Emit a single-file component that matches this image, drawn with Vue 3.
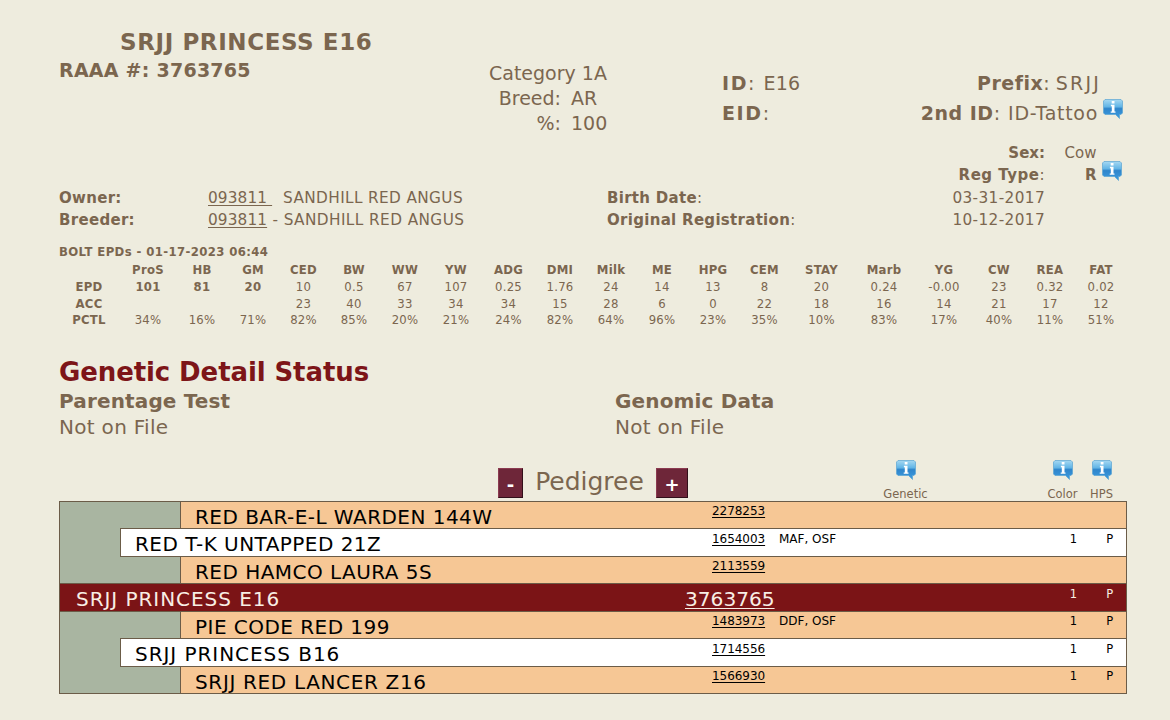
<template>
  <div class="page">
    <svg width="0" height="0" class="defs">
      <defs>
        <linearGradient id="bubble" x1="0" y1="0" x2="0" y2="1">
          <stop offset="0" stop-color="#a5d8f2" />
          <stop offset="0.38" stop-color="#62b5e6" />
          <stop offset="0.48" stop-color="#2f85cb" />
          <stop offset="1" stop-color="#3c9ce0" />
        </linearGradient>
        <symbol id="info" viewBox="0 0 20 20">
          <path d="M2 .5h16l1.500 1.500v12l-1.500 1.500h-1.500v4l-4-4H2L.5 14V2z" fill="url(#bubble)" stroke="#5aa5d3" stroke-width=".7" />
          <path d="M8.700 2h2.800v2.400H8.700zM7.900 5.800h3.600v6.600h1v1.400H7.700v-1.400h1.100V7.200h-.9z" fill="#fff" />
        </symbol>
      </defs>
    </svg>

    <!-- Animal header -->
    <header class="header">
      <div class="identity">
        <h1>SRJJ PRINCESS E16</h1>
        <div class="raaa">RAAA #: 3763765</div>
      </div>
      <div class="breed">
        <div class="category">Category 1A</div>
        <dl>
          <dt>Breed:</dt><dd>AR</dd>
          <dt>%:</dt><dd>100</dd>
        </dl>
      </div>
      <div class="ids">
        <div><b>ID</b>: <span class="tag">E16</span></div>
        <div><b>EID</b>:</div>
      </div>
      <div class="prefix">
        <div class="prefix-row"><b>Prefix</b>: <span class="srjj">SRJJ</span></div>
        <div class="tattoo-row"><b>2nd ID</b>: <span>ID-Tattoo</span><svg class="info"><use href="#info" /></svg></div>
      </div>
    </header>

    <!-- Sex and registration type -->
    <section class="type">
      <b class="type-label">Sex:</b><span class="type-value">Cow</span><i></i>
      <span class="type-label"><b>Reg Type</b>:</span><b class="type-value">R</b>
      <svg class="info"><use href="#info" /></svg>
    </section>

    <!-- Owner, breeder and dates -->
    <section class="owners">
      <b>Owner:</b>
      <span><a>093811&nbsp;</a><span class="owner-name">SANDHILL RED ANGUS</span></span>
      <span class="date-label"><b>Birth Date</b>:</span>
      <span class="date">03-31-2017</span>
      <b>Breeder:</b>
      <span><a>093811</a><span class="breeder-name"> - SANDHILL RED ANGUS</span></span>
      <span class="date-label"><b>Original Registration</b>:</span>
      <span class="date">10-12-2017</span>
    </section>

    <!-- EPDs -->
    <section class="epds">
      <div class="epd-title">BOLT EPDs - 01-17-2023 06:44</div>
      <div class="epd-grid">
        <div class="epd-col labels">
          <span></span><span>EPD</span><span>ACC</span><span>PCTL</span>
        </div>
        <div v-for="(e, i) in epds" :key="e[0]" class="epd-col" :class="{ index: i < 3 }">
          <b>{{ e[0] }}</b><span class="epd">{{ e[1] }}</span><span>{{ e[2] }}</span><span>{{ e[3] }}</span>
        </div>
      </div>
    </section>

    <!-- Genetic status -->
    <section class="genetic">
      <h2>Genetic Detail Status</h2>
      <div class="tests">
        <div><h3>Parentage Test</h3><p>Not on File</p></div>
        <div><h3>Genomic Data</h3><p>Not on File</p></div>
      </div>
    </section>

    <!-- Pedigree -->
    <section>
      <div class="pedigree-head">
        <div class="pedigree-title">
          <button class="minus">-</button><span>Pedigree</span><button class="plus">+</button>
        </div>
        <div v-for="c in ['Genetic', 'Color', 'HPS']" :key="c" class="legend" :class="c.toLowerCase()">
          <svg class="info"><use href="#info" /></svg>
          <span>{{ c }}</span>
        </div>
      </div>
      <div class="tree">
        <div v-for="a in animals" :key="a.reg" class="row" :class="a.level">
          <div class="bar">
            <span class="name" :class="{ srjj: a.name.startsWith('SRJJ P') }">{{ a.name }}</span>
            <span class="reg"><a>{{ a.reg }}</a></span>
            <span class="flags">{{ a.flags }}</span>
            <span class="color-code">{{ a.color }}</span>
            <span class="hps-code">{{ a.hps }}</span>
          </div>
        </div>
      </div>
    </section>
  </div>
</template>

<script setup>
// trait, EPD, accuracy, percentile
const epds = [
  ['ProS', '101', '', '34%'],
  ['HB', '81', '', '16%'],
  ['GM', '20', '', '71%'],
  ['CED', '10', '23', '82%'],
  ['BW', '0.5', '40', '85%'],
  ['WW', '67', '33', '20%'],
  ['YW', '107', '34', '21%'],
  ['ADG', '0.25', '34', '24%'],
  ['DMI', '1.76', '15', '82%'],
  ['Milk', '24', '28', '64%'],
  ['ME', '14', '6', '96%'],
  ['HPG', '13', '0', '23%'],
  ['CEM', '8', '22', '35%'],
  ['STAY', '20', '18', '10%'],
  ['Marb', '0.24', '16', '83%'],
  ['YG', '-0.00', '14', '17%'],
  ['CW', '23', '21', '40%'],
  ['REA', '0.32', '17', '11%'],
  ['FAT', '0.02', '12', '51%'],
];

const animals = [
  { level: 'grand', name: 'RED BAR-E-L WARDEN 144W', reg: '2278253' },
  { level: 'parent', name: 'RED T-K UNTAPPED 21Z', reg: '1654003', flags: 'MAF, OSF', color: '1', hps: 'P' },
  { level: 'grand', name: 'RED HAMCO LAURA 5S', reg: '2113559' },
  { level: 'self', name: 'SRJJ PRINCESS E16', reg: '3763765', color: '1', hps: 'P' },
  { level: 'grand', name: 'PIE CODE RED 199', reg: '1483973', flags: 'DDF, OSF', color: '1', hps: 'P' },
  { level: 'parent', name: 'SRJJ PRINCESS B16', reg: '1714556', color: '1', hps: 'P' },
  { level: 'grand', name: 'SRJJ RED LANCER Z16', reg: '1566930', color: '1', hps: 'P' },
];
</script>

<style>
body {
  background: #eeecde;
}
</style>

<style scoped>
.page {
  box-sizing: border-box;
  width: 1170px;
  height: 720px;
  padding: 28px 43px 0 59px;
  overflow: hidden;
  background: #eeecde;
  color: #7b664f;
  font-family: Verdana, "DejaVu Sans", sans-serif;
  white-space: nowrap;
}

.defs {
  position: absolute;
}

h1, h2, h3, p, dl, dd {
  margin: 0;
}

a {
  text-decoration: underline;
  text-underline-offset: 2px;
  text-decoration-thickness: 1px;
}

.info {
  width: 20px;
  height: 20px;
  flex: none;
}

/* Header */
.header {
  display: grid;
  grid-template-columns: 429px 234px 160px 1fr;
  height: 114px;
  font-size: 19px;
}

h1 {
  padding-left: 61px;
  font-size: 23px;
  line-height: 28px;
  letter-spacing: 0.6px;
}

.raaa {
  font-size: 19px;
  font-weight: bold;
  line-height: 28px;
  letter-spacing: 0.25px;
}

.breed {
  padding-top: 33px;
  line-height: 25px;
}

.category {
  padding-left: 1px;
}

.breed dl {
  display: grid;
  grid-template-columns: 73px auto;
  column-gap: 10px;
}

.breed dt {
  text-align: right;
}

.ids,
.prefix {
  padding-top: 40px;
  line-height: 30px;
}

.ids b {
  letter-spacing: 1.6px;
}

.tag {
  margin-left: 3px;
  letter-spacing: 0.2px;
}

.prefix {
  display: flex;
  flex-direction: column;
  align-items: flex-end;
}

.prefix b {
  letter-spacing: 0.5px;
}

.prefix-row {
  padding-right: 26px;
}

.prefix-row .srjj {
  letter-spacing: 2.2px;
}

.tattoo-row {
  display: flex;
  white-space: pre;
  padding-right: 4px;
}

.tattoo-row span {
  margin-left: 2px;
  letter-spacing: 0.7px;
}

.tattoo-row .info {
  margin: 1px 0 0 5px;
}

/* Sex / reg type */
.type {
  display: grid;
  grid-template-columns: 986px 51.500px 25px;
  grid-auto-rows: 22px;
  height: 45px;
  font-size: 15px;
  line-height: 22px;
}

.type-label,
.type-value {
  text-align: right;
}

span.type-label {
  letter-spacing: 0.5px;
}

.type .info {
  margin: -3px 0 0 5px;
}

/* Owners */
.owners {
  display: grid;
  grid-template-columns: 149px 399px 300px 138px;
  grid-auto-rows: 22px;
  height: 56px;
  font-size: 15.300px;
  line-height: 22px;
}

.owners > b,
.date-label {
  font-size: 15px;
  letter-spacing: 0.3px;
}

.owners a {
  letter-spacing: 0.12px;
}

.owner-name {
  margin-left: 11px;
  letter-spacing: 0.37px;
}

.breeder-name {
  letter-spacing: 0.42px;
}

.date {
  text-align: right;
  letter-spacing: 0.37px;
}

/* EPDs */
.epds {
  font-size: 11.700px;
  height: 112px;
}

.epd-title {
  height: 19px;
  font-weight: bold;
  line-height: 18px;
  letter-spacing: 0.38px;
}

.epd-grid {
  display: grid;
  grid-template-columns: 60px 58px 50px 52px 49px 52px 50px 52px 53px 50px 52px 50px 52px 51px 63px 62px 58px 52px 50px 52px;
}

.epd-col {
  display: grid;
  grid-template-rows: 17px 17px 16px 17px;
  line-height: 17px;
  text-align: center;
  letter-spacing: 0.25px;
}

.labels,
.index .epd {
  font-weight: bold;
}

/* Genetic status */
.genetic {
  height: 106px;
}

h2 {
  height: 33px;
  color: #7d1518;
  font-size: 26px;
  line-height: 35px;
  letter-spacing: -0.1px;
}

.tests {
  display: grid;
  grid-template-columns: 556px 1fr;
  font-size: 20px;
  line-height: 26px;
  letter-spacing: 0.3px;
}

h3 {
  font-size: 20px;
  line-height: 26px;
  letter-spacing: 0.15px;
}

/* Pedigree */
.pedigree-head {
  display: grid;
  grid-template-columns: 801px 91px 91px 41px 37px;
  height: 39.900px;
}

.pedigree-title {
  display: flex;
  padding-left: 439px;
  padding-top: 7px;
}

.pedigree-title span {
  width: 133px;
  font-size: 25px;
  line-height: 27px;
  text-align: center;
}

button {
  box-sizing: border-box;
  height: 30px;
  padding: 4px 0 0;
  border: 1px solid;
  border-color: #8b3a50 #32101a #32101a #8b3a50;
  background: #6e2639;
  color: #fff;
  font: bold 18px/22px Verdana, "DejaVu Sans", sans-serif;
}

.minus {
  width: 25px;
}

.plus {
  width: 32px;
}

.legend {
  display: flex;
  flex-direction: column;
  align-items: center;
  margin-top: -1px;
  font-size: 11.500px;
  line-height: 14px;
}

.legend .info {
  margin-bottom: 7px;
}

.color {
  grid-column: 4;
}

.tree {
  width: 1066px;
  height: 191.500px;
  border: 1px solid #6b5c48;
  background: #a9b5a1;
  color: #000;
}

.row {
  display: flex;
  height: 27.500px;
}

.bar {
  box-sizing: border-box;
  flex: 1;
  display: grid;
  grid-template-columns: 1fr 117px 286.500px 20px 42.500px;
  height: 27.500px;
  font-size: 12px;
  line-height: 19px;
}

.grand {
  padding-left: 120px;
}

.grand .bar {
  border-left: 1px solid #6b5c48;
  background: #f6c795;
}

.grand:last-child .bar {
  height: 26.500px;
}

.parent {
  padding-left: 60px;
}

/* these overlap the row above by their top border */
.parent .bar,
.self .bar {
  position: relative;
  z-index: 1;
  height: 28.500px;
  margin-top: -1px;
  border: solid #6b5c48;
  border-width: 1px 0;
  line-height: 21px;
}

.parent .bar {
  border-left-width: 1px;
  background: #fff;
}

.self .bar {
  background: #7b1416;
  color: #f8eee4;
}

.name {
  padding-left: 14px;
  font-size: 20px;
  line-height: 31px;
  letter-spacing: 0.46px;
}

.parent .name,
.self .name {
  line-height: 30px;
}

.self .name {
  padding-left: 16px;
}

.grand:last-child .name {
  letter-spacing: 0.65px;
}

.name.srjj {
  letter-spacing: 0.95px;
}

.reg {
  padding-left: 52px;
}

.reg a {
  letter-spacing: -0.05px;
}

.self .reg {
  padding-left: 25px;
  font-size: 20.200px;
  line-height: 30px;
}

.flags {
  padding-left: 2px;
}

.color-code,
.hps-code {
  font-size: 11.500px;
  text-align: center;
}

.hps-code {
  padding-left: 10px;
}
</style>
